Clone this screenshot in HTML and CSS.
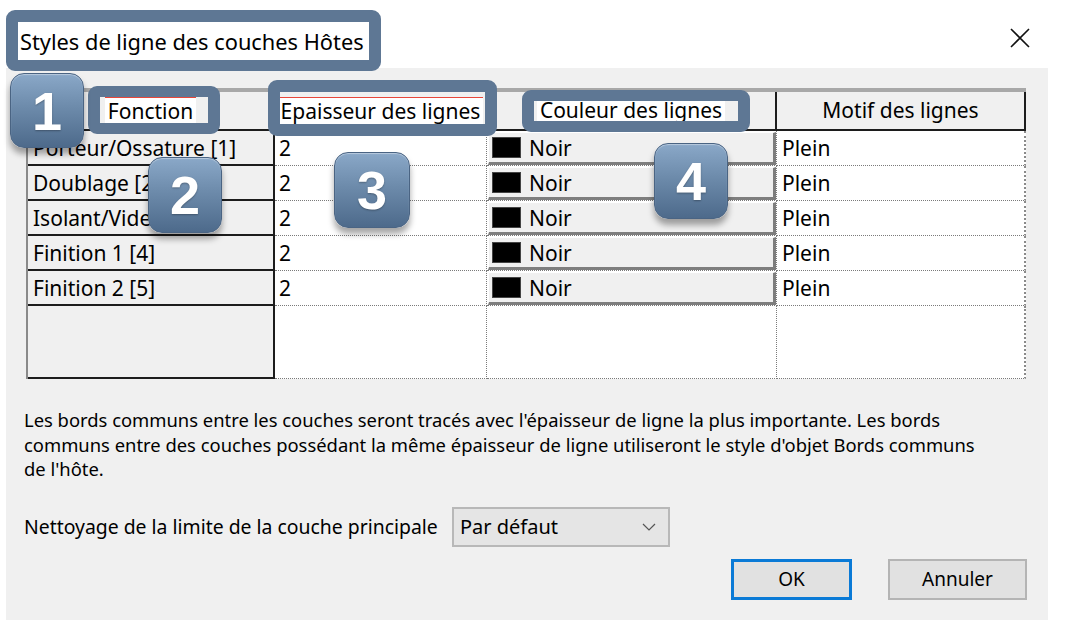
FILE: index.html
```html
<!DOCTYPE html>
<html lang="fr">
<head>
<meta charset="utf-8">
<title>Styles de ligne des couches Hôtes</title>
<link rel="stylesheet" href="styles.css">
</head>
<body>
<div class="window">
  <div class="titlebar">
    <span class="title">Styles de ligne des couches Hôtes</span>
    <svg class="close" width="20" height="20" viewBox="0 0 20 20"><path d="M1 1L19 19M19 1L1 19" stroke="#111" stroke-width="1.6" fill="none"/></svg>
  </div>
  <div class="panel">
    <div class="grid">
      <div class="hd c1"><span class="lbl red-top">Fonction</span></div>
      <div class="hd c2"><span class="lbl red-top red-bottom">Epaisseur des lignes</span></div>
      <div class="hd c3"><span class="lbl">Couleur des lignes</span></div>
      <div class="hd c4"><span class="lbl plain">Motif des lignes</span></div>

      <div class="rh">Porteur/Ossature [1]</div>
      <div class="val">2</div>
      <div class="col"><div class="btn"><span class="sw"></span>Noir</div></div>
      <div class="pat">Plein</div>

      <div class="rh">Doublage [2]</div>
      <div class="val">2</div>
      <div class="col"><div class="btn"><span class="sw"></span>Noir</div></div>
      <div class="pat">Plein</div>

      <div class="rh">Isolant/Vide [3]</div>
      <div class="val">2</div>
      <div class="col"><div class="btn"><span class="sw"></span>Noir</div></div>
      <div class="pat">Plein</div>

      <div class="rh">Finition 1 [4]</div>
      <div class="val">2</div>
      <div class="col"><div class="btn"><span class="sw"></span>Noir</div></div>
      <div class="pat">Plein</div>

      <div class="rh">Finition 2 [5]</div>
      <div class="val">2</div>
      <div class="col"><div class="btn"><span class="sw"></span>Noir</div></div>
      <div class="pat">Plein</div>

      <div class="rh empty"></div>
      <div class="val empty"></div>
      <div class="col empty"></div>
      <div class="pat empty"></div>
    </div>

    <p class="note">Les bords communs entre les couches seront tracés avec l'épaisseur de ligne la plus importante. Les bords communs entre des couches possédant la même épaisseur de ligne utiliseront le style d'objet Bords communs de l'hôte.</p>

    <div class="cleanup">
      <span class="cl-label">Nettoyage de la limite de la couche principale</span>
      <div class="select"><span>Par défaut</span>
        <svg width="14" height="8" viewBox="0 0 14 8"><path d="M1 1L7 7L13 1" stroke="#555" stroke-width="1.2" fill="none"/></svg>
      </div>
    </div>

    <div class="actions">
      <div class="button ok">OK</div>
      <div class="button">Annuler</div>
    </div>
  </div>

  <div class="frame f-title"></div>
  <div class="frame f-fonction"></div>
  <div class="frame f-epaisseur"></div>
  <div class="frame f-couleur"></div>

  <div class="badge b1">1</div>
  <div class="badge b2">2</div>
  <div class="badge b3">3</div>
  <div class="badge b4">4</div>
</div>
</body>
</html>
```

FILE: styles.css
```css
* { box-sizing: border-box; }
html, body { margin: 0; padding: 0; background: #fff; }
body { font-family: "Noto Sans", "Open Sans", sans-serif; color: #000; }

.window {
  position: relative;
  width: 1074px;
  height: 628px;
  background: #fff;
  overflow: hidden;
}

.titlebar {
  height: 68px;
  display: flex;
  align-items: center;
  justify-content: space-between;
  padding: 14px 44px 0 20px;
}
.title { font-size: 21.8px; }
.close { display: block; margin-top: -6px; }

.panel {
  margin-left: 6px;
  width: 1042px;
  height: 552px;
  background: #f0f0f0;
  padding: 20px 21px 0 20px;
  display: flex;
  flex-direction: column;
}

/* grid */
.grid {
  width: 1000px;
  display: grid;
  grid-template-columns: 247px 212px 290px 249px;
  grid-template-rows: 39px 35px 35px 35px 35px 35px 73px;
  border-top: 4px solid #a8a8a8;
  border-left: 2px solid #8a8a8a;
  font-size: 21px;
}
.hd {
  background: #f0f0f0;
  border-right: 2px solid #1c1c1c;
  border-bottom: 2px solid #1c1c1c;
  display: flex;
  align-items: center;
  justify-content: center;
}
.hd.c1 { border-right: 2px solid #a0a0a0; }
.hd.c2 { border-right: 1px solid #c8c8c8; }
.hd.c3 { border-right: 2px solid #1c1c1c; }
.hd.c4 { border-right: 2px solid #1c1c1c; }
.lbl {
  background: #fff;
  padding: 0 3px;
  line-height: 27px;
}
.lbl.plain { background: transparent; }
.red-top { border-top: 1px solid #e8473a; }
.red-bottom { box-shadow: 0 9px 0 -6px #e8473a; }

.rh {
  background: #f0f0f0;
  border-right: 2px solid #1c1c1c;
  border-bottom: 2px solid #1c1c1c;
  padding-left: 5px;
  display: flex;
  align-items: center;
  white-space: nowrap;
}
.val, .pat {
  background: #fff;
  border-right: 1px dotted #7a7a7a;
  border-bottom: 1px dotted #7a7a7a;
  display: flex;
  align-items: center;
}
.val { padding-left: 4px; }
.pat { padding-left: 5px; border-right: 2px dotted #8a8a8a; }
.col {
  background: #fff;
  border-right: 1px dotted #7a7a7a;
  border-bottom: 1px dotted #7a7a7a;
  padding: 1px 0 0 1px;
  display: flex;
}
.col.empty { padding: 0; }
.btn {
  flex: 1;
  background: #f0f0f0;
  border-top: 1px solid #fff;
  border-left: 1px solid #fff;
  border-right: 3px solid #7e7e7e;
  border-bottom: 3px solid #7e7e7e;
  display: flex;
  align-items: center;
  padding-left: 3px;
}
.sw {
  width: 29px;
  height: 21px;
  background: #000;
  border: 1px solid #444;
  margin-right: 8px;
}

/* note */
.note {
  margin: 29px 0 0 -2px;
  font-size: 18.4px;
  line-height: 24.5px;
  width: 962px;
}

.cleanup {
  margin-top: 25px;
  display: flex;
  align-items: center;
  margin-left: -2px;
}
.cl-label { width: 428px; font-size: 19.4px; white-space: nowrap; }
.select {
  width: 218px;
  height: 40px;
  background: #e5e5e5;
  border: 2px solid #b8b8b8;
  display: flex;
  align-items: center;
  justify-content: space-between;
  padding: 0 12px 0 6px;
  font-size: 20px;
}

.actions {
  margin-top: 12px;
  display: flex;
  justify-content: flex-end;
  gap: 36px;
}
.button {
  width: 139px;
  height: 41px;
  background: #e1e1e1;
  border: 2px solid #b4b4b4;
  display: flex;
  align-items: center;
  justify-content: center;
  font-size: 19px;
}
.button.ok { width: 121px; border: 3px solid #0a7ad6; }

/* annotation overlays */
.frame {
  position: absolute;
  border: 12px solid #5e7794;
  border-radius: 9px;
}
.f-title { left: 6px; top: 10px; width: 375px; height: 61px; border-bottom-width: 11px; }
.f-fonction { left: 88px; top: 86px; width: 132px; height: 48px; border-width: 11px 12px; }
.f-epaisseur { left: 268px; top: 80px; width: 229px; height: 56px; }
.f-couleur { left: 522px; top: 90px; width: 228px; height: 42px; border-width: 11px 12px; }

.badge {
  position: absolute;
  width: 74px;
  height: 75px;
  border-radius: 14px;
  background: linear-gradient(#8aa8c8, #6d8bab 45%, #4d6a8b);
  border: 1px solid #4a6483;
  box-shadow: 0 6px 6px rgba(0,0,0,0.35), inset 0 1px 1px rgba(255,255,255,0.4);
  color: #fff;
  font-family: "Liberation Sans", Arial, sans-serif;
  font-weight: bold;
  font-size: 54px;
  display: flex;
  align-items: center;
  justify-content: center;
  text-shadow: 0 1px 2px rgba(0,0,0,0.3);
}
.b1 { left: 10px; top: 73px; }
.b2 { left: 148px; top: 157px; height: 76px; }
.b3 { left: 334px; top: 152px; width: 76px; height: 76px; }
.b4 { left: 654px; top: 143px; height: 76px; }
```
